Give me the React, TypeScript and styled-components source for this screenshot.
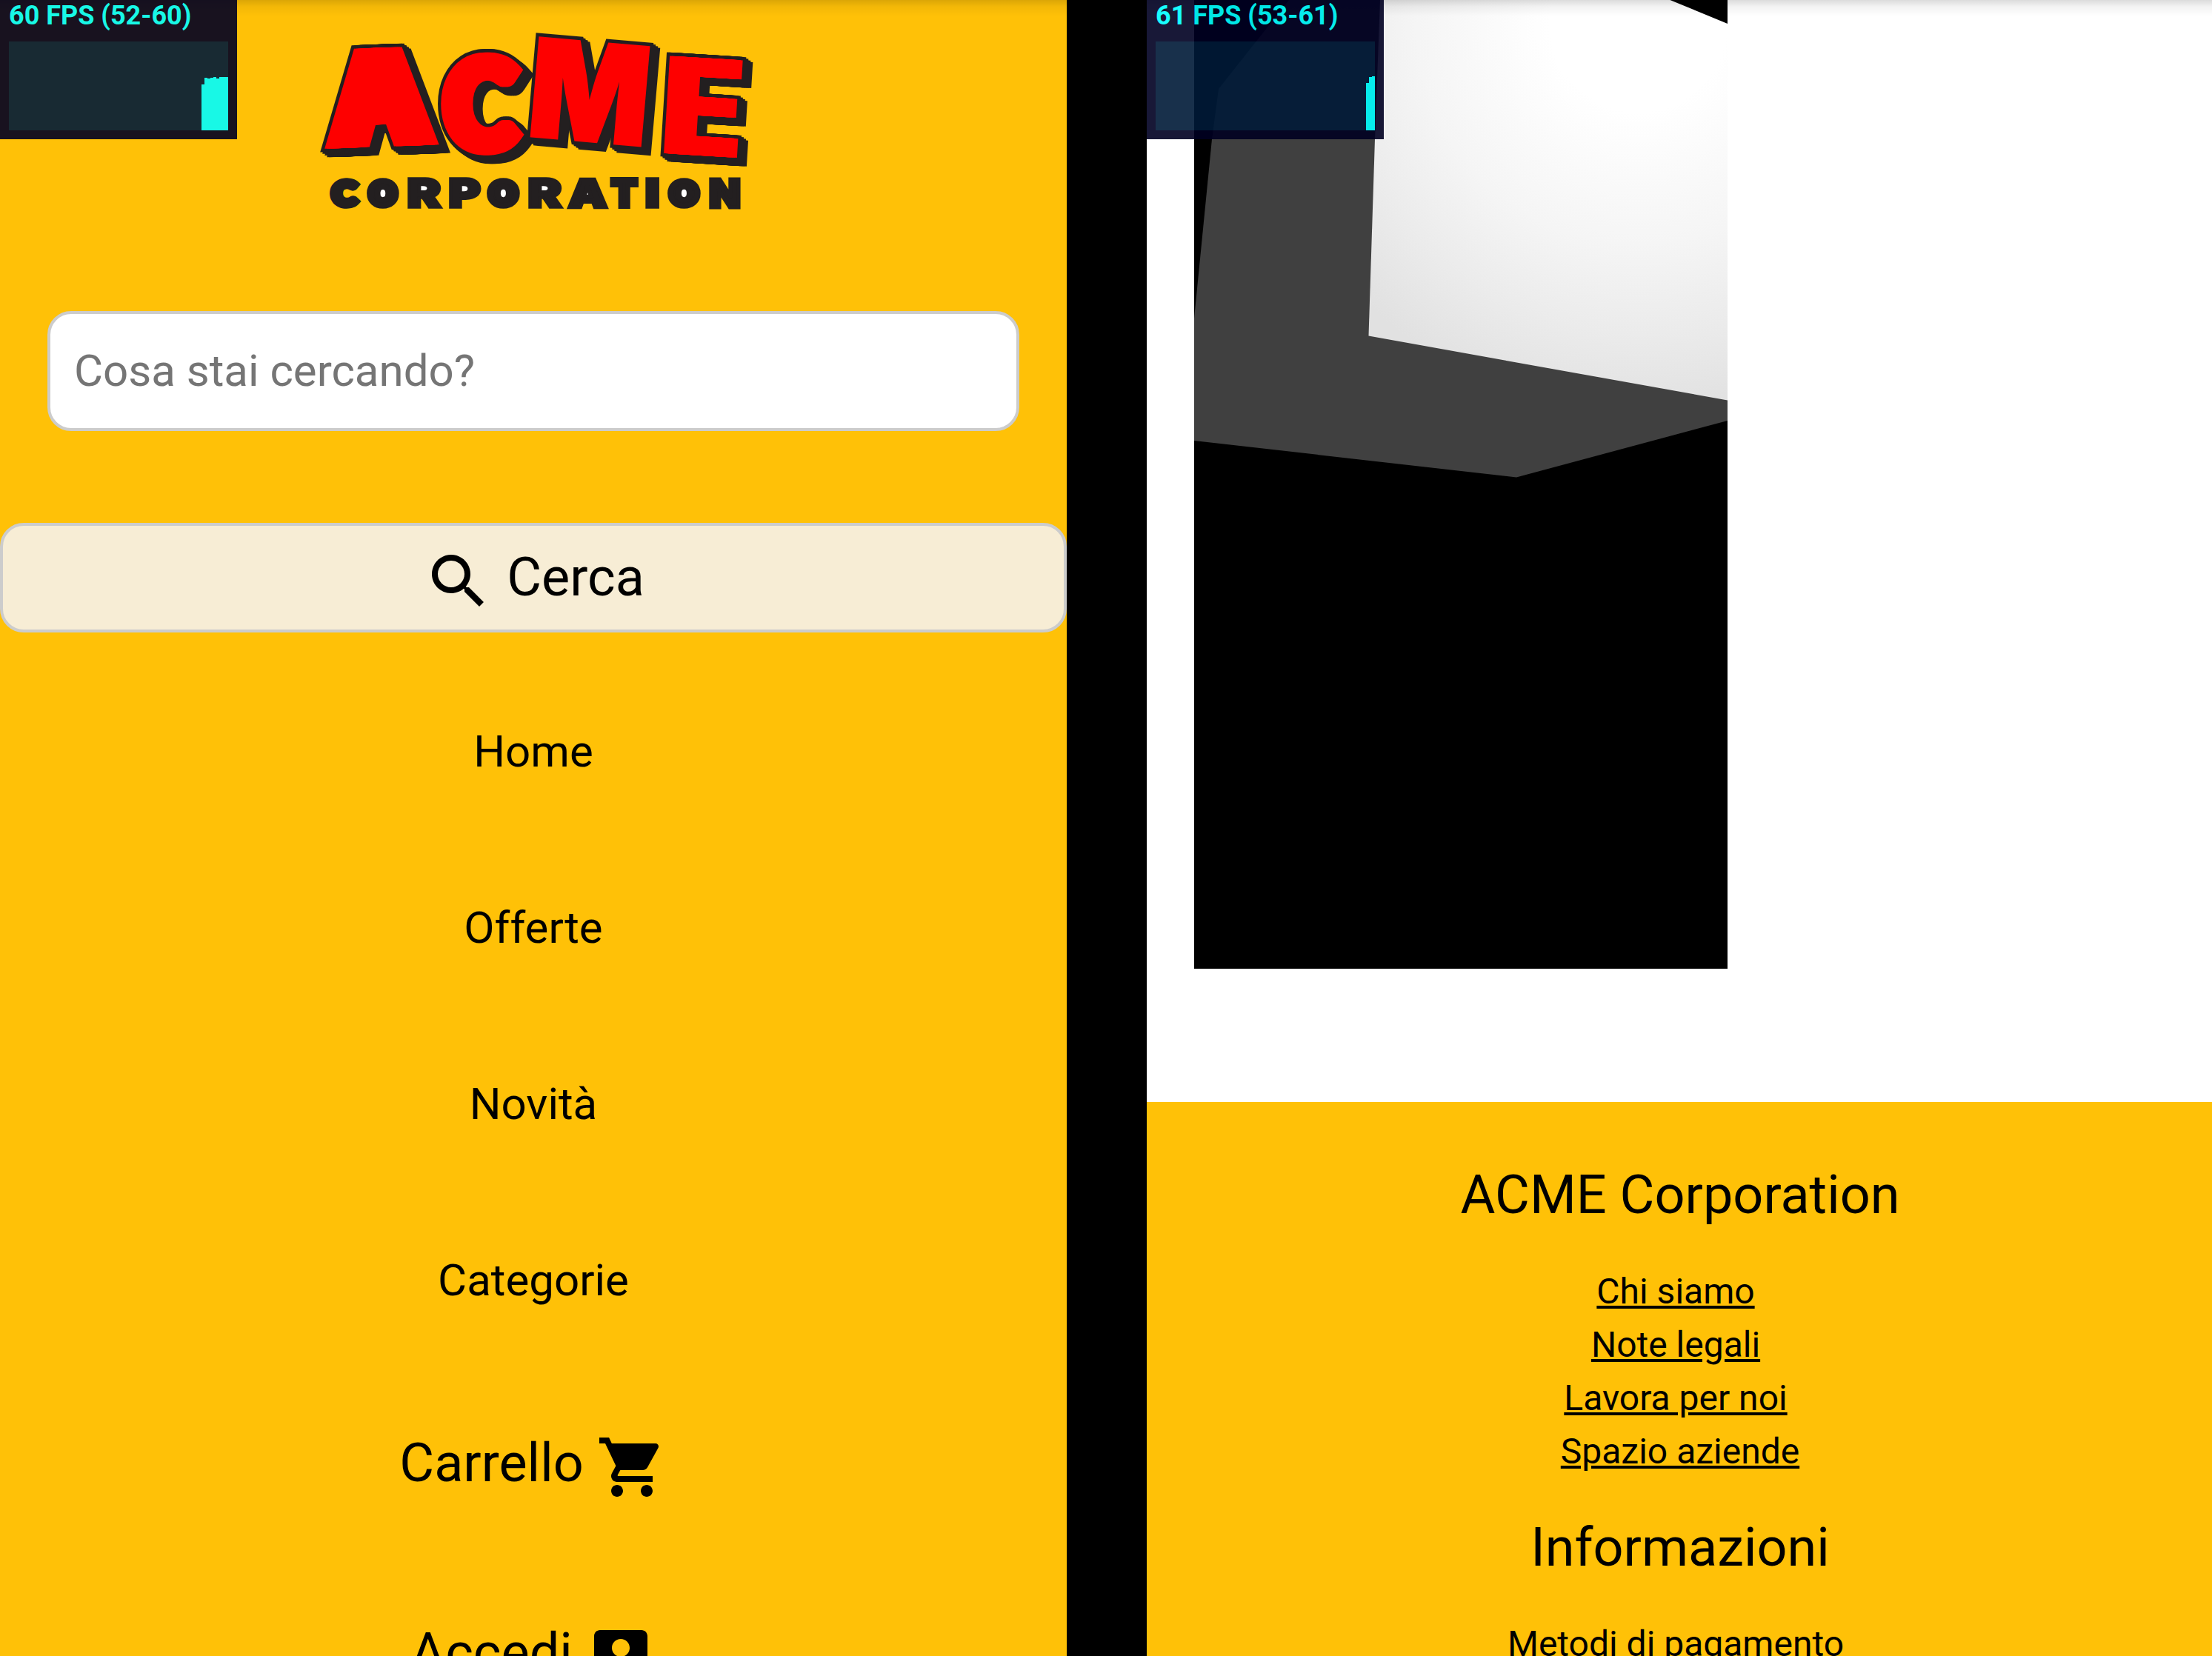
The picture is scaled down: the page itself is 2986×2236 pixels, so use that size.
import React from "react";
import styled, { createGlobalStyle } from "styled-components";

const GlobalStyle = createGlobalStyle`
  *, *::before, *::after { box-sizing: border-box; }
  html, body { margin: 0; padding: 0; background: #000; }
  body { font-family: Roboto, "Liberation Sans", sans-serif; color: #000; overflow: hidden; }
`;

const Stage = styled.main`
  display: flex;
  gap: 108px;
  width: 2986px;
  height: 2236px;
  overflow: hidden;
  background: #000;
`;

const Screen = styled.section<{ $background: string }>`
  position: relative;
  flex: 0 0 1440px;
  display: flex;
  flex-direction: column;
  height: 2236px;
  overflow: hidden;
  background: ${(p) => p.$background};
`;

const TopShade = styled.div`
  position: absolute;
  inset: 0 0 auto 0;
  height: 22px;
  background: linear-gradient(rgba(0, 0, 0, 0.14), rgba(0, 0, 0, 0.05) 40%, rgba(0, 0, 0, 0));
`;

/* ---------- frame-rate monitor ---------- */

const Monitor = styled.aside`
  position: absolute;
  top: 0;
  left: 0;
  width: 320px;
  height: 188px;
  padding: 0 12px 12px;
  background: #000022;
  color: #0ff;
  opacity: 0.9;
`;

const MonitorLabel = styled.div`
  height: 56px;
  font-size: 36px;
  font-weight: 700;
  line-height: 42px;
  white-space: nowrap;
`;

const MonitorGraph = styled.div`
  display: flex;
  align-items: flex-end;
  justify-content: flex-end;
  height: 120px;
  background: #001a38;
`;

const MonitorBar = styled.i`
  width: 4px;
  background: #0ff;
`;

function FrameMonitor({ label, samples }: { label: string; samples: number[] }) {
  return (
    <Monitor>
      <MonitorLabel>{label}</MonitorLabel>
      <MonitorGraph>
        {samples.map((value, i) => (
          <MonitorBar key={i} style={{ height: value }} />
        ))}
      </MonitorGraph>
    </Monitor>
  );
}

/* ---------- logo ---------- */

const LogoSvg = styled.svg`
  display: block;
  flex: none;
  width: 1440px;
  height: 420px;
`;

const LogoLetter = styled.text<{ $face: string }>`
  font: ${(p) => p.$face}, sans-serif;
  stroke-linejoin: miter;
  stroke-miterlimit: 3;
  vector-effect: non-scaling-stroke;
`;

const INTER_BOLD = "700 100px Inter";
const INTER_BLACK = "900 100px Inter";
const LATO_BLACK = "900 100px Lato";

type Box = { x: number; y: number; w: number; h: number };

/* Matrix that stretches a 100px letter so its ink fills the box. */
function fitLetter(char: string, face: string, box: Box) {
  const ctx = document.createElement("canvas").getContext("2d")!;
  ctx.font = `${face}, sans-serif`;
  const m = ctx.measureText(char);
  const left = -m.actualBoundingBoxLeft;
  const top = -m.actualBoundingBoxAscent;
  const sx = box.w / (m.actualBoundingBoxRight - left);
  const sy = box.h / (m.actualBoundingBoxDescent - top);
  return `matrix(${sx} 0 0 ${sy} ${box.x - left * sx} ${box.y - top * sy})`;
}

function inset(box: Box, by: number): Box {
  return { x: box.x + by, y: box.y + by, w: box.w - by * 2, h: box.h - by * 2 };
}

/* Offsets from 0 to total, close enough together to read as one widened stem. */
function spread(total: number) {
  const steps = Math.ceil(total / 3);
  return Array.from({ length: steps + 1 }, (_, i) => (steps ? (total * i) / steps : 0));
}

type BigLetter = { char: string; face: string; box: Box; warp?: string; weight: number; widen: number };

const INK = "#231f20";
const bigLetters: BigLetter[] = [
  { char: "A", face: INTER_BOLD, box: { x: 436, y: 64, w: 155, h: 134 }, warp: "rotate(-2 514 131)", weight: 4, widen: 28 },
  { char: "C", face: LATO_BLACK, box: { x: 594, y: 73, w: 113, h: 137 }, weight: 16, widen: 6 },
  { char: "M", face: INTER_BLACK, box: { x: 720, y: 55, w: 152, h: 137 }, warp: "rotate(5 796 123)", weight: 4, widen: 0 },
  { char: "E", face: INTER_BOLD, box: { x: 899, y: 78, w: 101, h: 132 }, warp: "rotate(3.5 949 144)", weight: 4, widen: 14 },
];

const smallLetters: { char: string; face: string; from: number; to: number; weight: number }[] = [
  { char: "C", face: LATO_BLACK, from: 445, to: 486, weight: 10 },
  { char: "O", face: INTER_BLACK, from: 495, to: 539, weight: 8 },
  { char: "R", face: INTER_BLACK, from: 550, to: 597, weight: 4 },
  { char: "P", face: INTER_BLACK, from: 606, to: 650, weight: 4 },
  { char: "O", face: INTER_BLACK, from: 657, to: 702, weight: 8 },
  { char: "R", face: INTER_BLACK, from: 713, to: 760, weight: 4 },
  { char: "A", face: INTER_BLACK, from: 766, to: 821, weight: 5 },
  { char: "T", face: INTER_BLACK, from: 823, to: 862, weight: 6 },
  { char: "I", face: INTER_BLACK, from: 871, to: 890, weight: 4 },
  { char: "O", face: INTER_BLACK, from: 901, to: 946, weight: 8 },
  { char: "N", face: INTER_BLACK, from: 957, to: 1000, weight: 5 },
];

function LetterLayer({ letter, color, weight }: { letter: BigLetter; color: string; weight: number }) {
  const { char, face, box, warp, widen } = letter;
  const inner = inset(box, letter.weight / 2);
  const fit = fitLetter(char, face, { ...inner, w: inner.w - widen });
  return (
    <g transform={warp}>
      {spread(widen).map((dx) => (
        <g key={dx} transform={`translate(${dx} 0)`}>
          <LogoLetter $face={face} transform={fit} fill={color} stroke={color} strokeWidth={weight}>
            {char}
          </LogoLetter>
        </g>
      ))}
    </g>
  );
}

function Logo() {
  return (
    <LogoSvg viewBox="0 0 1440 420">
      <g fill="#fff">
        <path d="M514 90L530 152H500Z" />
        <rect x="507" y="249" width="20" height="22" />
        <rect x="564" y="246" width="18" height="14" />
        <rect x="620" y="246" width="18" height="16" />
        <rect x="669" y="249" width="20" height="22" />
        <rect x="727" y="246" width="18" height="14" />
        <path d="M793.500 246l7 22h-14z" />
        <rect x="913" y="249" width="20" height="22" />
      </g>
      {bigLetters.map((letter) => (
        <g key={letter.char}>
          {[0, 3, 6, 9].map((d) => (
            <g key={d} transform={`translate(${d} ${d * 0.75})`}>
              <LetterLayer letter={letter} color={INK} weight={letter.weight + 9} />
            </g>
          ))}
          <LetterLayer letter={letter} color="#fe0000" weight={letter.weight} />
        </g>
      ))}
      {smallLetters.map(({ char, face, from, to, weight }) => (
        <LogoLetter
          key={from}
          $face={face}
          transform={fitLetter(char, face, inset({ x: from, y: 239, w: to - from, h: 43 }, weight / 2))}
          fill={INK}
          stroke={INK}
          strokeWidth={weight}
        >
          {char}
        </LogoLetter>
      ))}
    </LogoSvg>
  );
}

/* ---------- menu ---------- */

const SearchInput = styled.input`
  flex: none;
  width: 1312px;
  height: 162px;
  margin: 0 64px;
  padding: 0 32px 2px;
  border: 4px solid #ccc;
  border-radius: 32px;
  background: #fff;
  font: 400 60px Roboto, sans-serif;
  &::placeholder { color: #757575; opacity: 1; }
`;

const SearchButton = styled.button`
  flex: none;
  display: flex;
  align-items: center;
  justify-content: center;
  gap: 17px;
  width: 100%;
  height: 148px;
  margin: 124px 0 42px;
  padding: 0 0 0 1px;
  border: 4px solid #ccc;
  border-radius: 32px;
  background: #f7edd5;
  color: #000;
  font: 400 72px/140px Roboto, sans-serif;
`;

const Icon = styled.svg<{ $drop: number }>`
  flex: none;
  width: 96px;
  height: 96px;
  margin-top: ${(p) => p.$drop}px;
  fill: currentColor;
`;

const Menu = styled.nav`
  display: flex;
  flex-direction: column;
`;

const MenuItem = styled.a<{ $large?: boolean }>`
  display: flex;
  align-items: center;
  justify-content: center;
  gap: 17px;
  height: ${(p) => (p.$large ? 256 : 238)}px;
  font-size: ${(p) => (p.$large ? 72 : 60)}px;
  line-height: ${(p) => (p.$large ? 256 : 238)}px;
`;

/* ---------- scene and footer ---------- */

const SceneArea = styled.div`
  flex: none;
  height: 1488px;
  padding-left: 64px;
  background: #fff;
`;

const Scene = styled.svg`
  display: block;
  width: 720px;
  height: 1308px;
  background: #000;
`;

const Footer = styled.footer`
  flex: 1;
  display: flex;
  flex-direction: column;
  align-items: center;
  padding-top: 72px;
  background: #ffc107;
`;

const FooterTitle = styled.h2`
  flex: none;
  margin: 0;
  font-size: 72px;
  font-weight: 400;
  line-height: 108px;
`;

const FooterList = styled.ul`
  flex: none;
  margin: 40px 0 40px;
  padding: 0;
  list-style: none;
  text-align: center;
  font-size: 48px;
  line-height: 72px;
`;

const FooterLink = styled.a`
  color: #000;
  text-decoration: underline;
`;

const FooterItem = styled.li<{ $shift?: boolean }>`
  padding-right: ${(p) => (p.$shift ? 12 : 0)}px;
`;

function LinkList({ items, lastCentered }: { items: string[]; lastCentered?: boolean }) {
  return (
    <FooterList>
      {items.map((item, i) => (
        <FooterItem key={item} $shift={!(lastCentered && i === items.length - 1)}>
          <FooterLink>{item}</FooterLink>
        </FooterItem>
      ))}
    </FooterList>
  );
}

export default function App() {
  return (
    <>
      <GlobalStyle />
      <Stage>
        <Screen $background="#ffc107">
          <Logo />
          <SearchInput placeholder="Cosa stai cercando?" />
          <SearchButton>
            <Icon viewBox="0 0 24 24" $drop={10}>
              <path d="M15.500 14h-.79l-.28-.27C15.410 12.590 16 11.110 16 9.500 16 5.910 13.090 3 9.500 3S3 5.910 3 9.500 5.910 16 9.500 16c1.610 0 3.090-.59 4.230-1.570l.27.28v.79l5 4.990L20.490 19l-4.990-5zm-6 0C7.010 14 5 11.990 5 9.500S7.010 5 9.500 5 14 7.010 14 9.500 11.990 14 9.500 14z" />
            </Icon>
            Cerca
          </SearchButton>
          <Menu>
            <MenuItem>Home</MenuItem>
            <MenuItem>Offerte</MenuItem>
            <MenuItem>Novità</MenuItem>
            <MenuItem>Categorie</MenuItem>
            <MenuItem $large>
              Carrello
              <Icon viewBox="0 0 24 24" $drop={10}>
                <path d="M7 18c-1.100 0-1.990.9-1.990 2S5.900 22 7 22s2-.9 2-2-.9-2-2-2zM1 2v2h2l3.600 7.590-1.350 2.450c-.16.28-.25.61-.25.96 0 1.100.9 2 2 2h12v-2H7.420c-.14 0-.25-.11-.25-.25l.03-.12.9-1.630h7.450c.75 0 1.410-.41 1.750-1.030l3.580-6.490c.08-.14.12-.31.12-.48 0-.55-.45-1-1-1H5.210l-.94-2H1zm16 16c-1.100 0-1.990.9-1.990 2s.89 2 1.990 2 2-.9 2-2-.9-2-2-2z" />
              </Icon>
            </MenuItem>
            <MenuItem $large>
              Accedi
              <Icon viewBox="0 0 24 24" $drop={10}>
                <path d="M3 5v14c0 1.100.89 2 2 2h14c1.100 0 2-.9 2-2V5c0-1.100-.9-2-2-2H5c-1.110 0-2 .9-2 2zm12 4c0 1.660-1.340 3-3 3s-3-1.340-3-3 1.340-3 3-3 3 1.340 3 3zm-9 8c0-2 4-3.100 6-3.100s6 1.100 6 3.100v1H6v-1z" />
              </Icon>
            </MenuItem>
          </Menu>
          <TopShade />
          <FrameMonitor label="60 FPS (52-60)" samples={[62, 71, 70, 71, 72, 70, 72, 72, 72]} />
        </Screen>

        <Screen $background="#fff">
          <SceneArea>
            <Scene viewBox="0 0 720 1308">
              <defs>
                <radialGradient id="light" gradientUnits="userSpaceOnUse" cx="600" cy="30" r="600">
                  <stop offset="0.2" stopColor="#fff" />
                  <stop offset="0.5" stopColor="#f5f5f5" />
                  <stop offset="0.7" stopColor="#ebebeb" />
                  <stop offset="0.88" stopColor="#e1e1e1" />
                </radialGradient>
              </defs>
              <path d="M128 0L33 120L24 188L0 430V595L435 644.500L720 568V0Z" fill="#404040" />
              <path d="M251 0L244 188L235.500 453.500L720 540.500V31L642 -2Z" fill="url(#light)" />
              <path d="M640 -1L720 32V-1Z" fill="#000" />
            </Scene>
          </SceneArea>
          <Footer>
            <FooterTitle>ACME Corporation</FooterTitle>
            <LinkList items={["Chi siamo", "Note legali", "Lavora per noi", "Spazio aziende"]} lastCentered />
            <FooterTitle>Informazioni</FooterTitle>
            <LinkList items={["Metodi di pagamento"]} />
          </Footer>
          <TopShade />
          <FrameMonitor label="61 FPS (53-61)" samples={[64, 72, 73]} />
        </Screen>
      </Stage>
    </>
  );
}
